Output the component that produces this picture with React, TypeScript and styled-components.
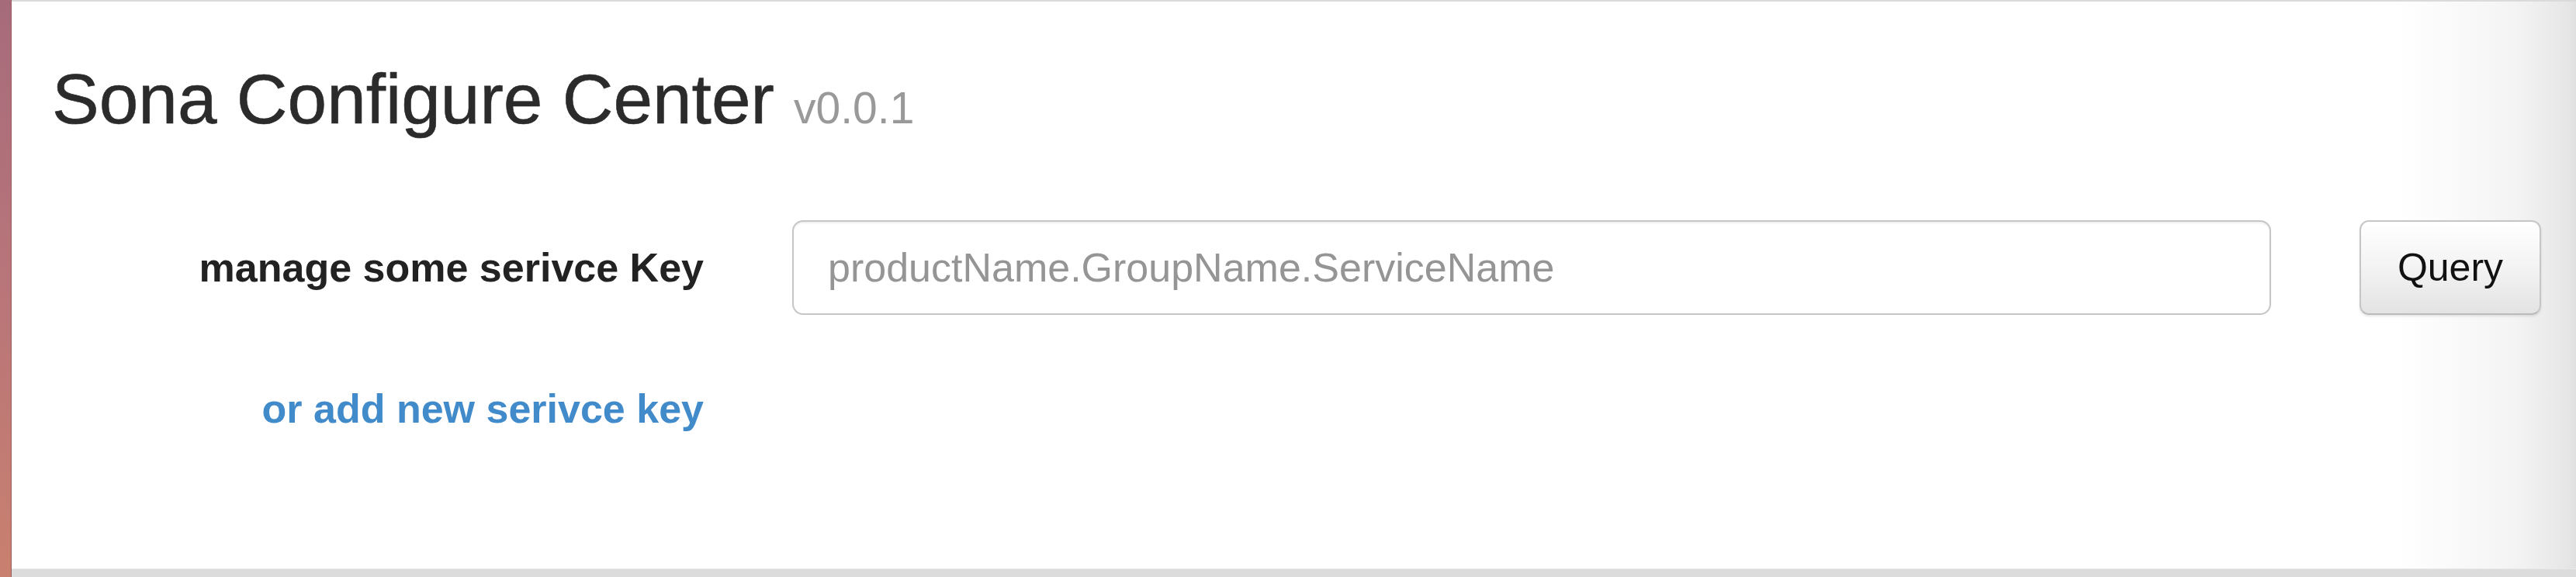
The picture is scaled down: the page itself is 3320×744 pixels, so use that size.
import React from "react";
import styled, { createGlobalStyle } from "styled-components";

const Global = createGlobalStyle`
  html, body {
    margin: 0;
    padding: 0;
    width: 3320px;
    height: 744px;
    overflow: hidden;
    background: #ffffff;
    font-family: "Liberation Sans", Arial, Helvetica, sans-serif;
  }
  * { box-sizing: border-box; }
`;

const Frame = styled.div`
  display: flex;
  width: 3320px;
  height: 744px;
`;

const Wallpaper = styled.div`
  flex: 0 0 15px;
  background: linear-gradient(180deg, #a66b7b 0%, #b7747a 45%, #c9806f 100%);
  border-right: 1px solid #9a5f5a;
`;

const Window = styled.div`
  flex: 1;
  display: flex;
  flex-direction: column;
  background: #ffffff;
`;

const TopRule = styled.div`
  height: 2px;
  background: #dadada;
`;

const Body = styled.main`
  flex: 1;
  padding: 76px 0 0 52px;
  background: linear-gradient(
    90deg,
    #ffffff 0%,
    #ffffff calc(100% - 230px),
    #f4f4f4 calc(100% - 80px),
    #e6e6e6 calc(100% - 10px),
    #e0e0e0 100%
  );
`;

const BottomBar = styled.div`
  height: 11px;
  background: #dcdcdc;
  border-top: 1px solid #e8e8e8;
`;

const Title = styled.h1`
  margin: 0;
  font-size: 91px;
  line-height: 100px;
  font-weight: 400;
  color: #2b2b2b;
  white-space: nowrap;
  -webkit-text-stroke: 0.6px #2b2b2b;
`;

const Version = styled.small`
  font-size: 57px;
  line-height: 0;
  color: #999999;
  font-weight: 400;
  -webkit-text-stroke: 0;
`;

const Form = styled.form`
  margin-top: 106px;
  display: grid;
  grid-template-columns: 840px 1906px 234px;
  grid-template-rows: 122px 60px;
  column-gap: 114px;
  row-gap: 91px;
  align-items: center;
`;

const Label = styled.label`
  justify-self: end;
  font-size: 52px;
  font-weight: 700;
  color: #222222;
  white-space: nowrap;
`;

const Input = styled.input`
  height: 122px;
  width: 100%;
  padding: 0 44px;
  border: 2px solid #c6c6c6;
  border-radius: 14px;
  font-family: inherit;
  font-size: 52px;
  color: #555555;
  background: #ffffff;
  box-shadow: inset 0 2px 2px rgba(0, 0, 0, 0.06);
  outline: none;
  &::placeholder {
    color: #959595;
  }
`;

const Button = styled.button`
  height: 122px;
  width: 234px;
  border: 2px solid #c6c6c6;
  border-bottom-color: #bbbbbb;
  border-radius: 12px;
  background: linear-gradient(180deg, #ffffff 0%, #f3f3f3 50%, #e3e3e3 100%);
  box-shadow: 0 2px 3px rgba(0, 0, 0, 0.1);
  font-family: inherit;
  font-size: 50px;
  color: #111111;
  padding: 0;
  cursor: pointer;
`;

const AddLink = styled.a`
  justify-self: end;
  font-size: 52px;
  font-weight: 700;
  line-height: 60px;
  color: #428bca;
  text-decoration: none;
  white-space: nowrap;
`;

export default function App() {
  return (
    <>
      <Global />
      <Frame>
        <Wallpaper />
        <Window>
          <TopRule />
          <Body>
            <Title>
              Sona Configure Center <Version>v0.0.1</Version>
            </Title>
            <Form onSubmit={(e) => e.preventDefault()}>
              <Label htmlFor="svc">manage some serivce Key</Label>
              <Input id="svc" placeholder="productName.GroupName.ServiceName" />
              <Button type="submit">Query</Button>
              <AddLink href="#">or add new serivce key</AddLink>
            </Form>
          </Body>
          <BottomBar />
        </Window>
      </Frame>
    </>
  );
}
